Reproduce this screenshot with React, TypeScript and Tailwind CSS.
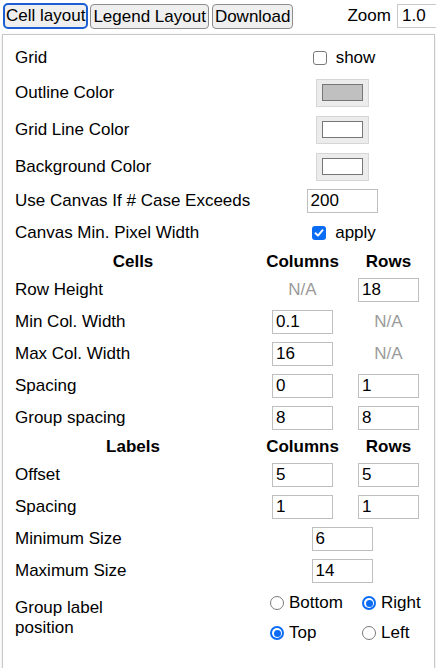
import React from 'react';

type RowProps = { h: string; children: React.ReactNode };

const Row: React.FC<RowProps> = ({ h, children }) => (
  <div className={`grid grid-cols-[246px_93px_79px] items-center ${h}`}>{children}</div>
);

const Label: React.FC<{ children: React.ReactNode }> = ({ children }) => (
  <div className="pl-[5px] leading-[20px]">{children}</div>
);

const TextBox: React.FC<{ value: string; w?: string }> = ({ value, w = 'w-[61px]' }) => (
  <input
    defaultValue={value}
    className={`${w} h-[24px] border border-[#bfbfbf] bg-white px-[3px] text-[17px] text-black outline-none`}
  />
);

const NA = () => <span className="text-[#9b9b9b]">N/A</span>;

const Check: React.FC<{ checked?: boolean }> = ({ checked }) =>
  checked ? (
    <span className="flex h-[14px] w-[14px] items-center justify-center rounded-[3px] bg-[#0a6cf5]">
      <svg width="10" height="10" viewBox="0 0 10 10">
        <path d="M1.5 5.2 L4 7.6 L8.6 2.2" fill="none" stroke="white" strokeWidth="1.9" strokeLinecap="round" strokeLinejoin="round" />
      </svg>
    </span>
  ) : (
    <span className="block h-[14px] w-[14px] rounded-[3px] border border-[#7a7a7a] bg-white"></span>
  );

const Radio: React.FC<{ checked?: boolean; label: string }> = ({ checked, label }) => (
  <div className="flex h-[30px] items-center gap-[5px]">
    {checked ? (
      <span className="flex h-[14px] w-[14px] items-center justify-center rounded-full bg-[#0a6cf5]">
        <span className="flex h-[10px] w-[10px] items-center justify-center rounded-full bg-white">
          <span className="block h-[7px] w-[7px] rounded-full bg-[#0a6cf5]"></span>
        </span>
      </span>
    ) : (
      <span className="block h-[14px] w-[14px] rounded-full border border-[#7a7a7a] bg-white"></span>
    )}
    <span>{label}</span>
  </div>
);

const Swatch: React.FC<{ fill: string }> = ({ fill }) => (
  <div className="flex h-[28px] w-[53px] items-center justify-center border border-[#d6d6d6] bg-[#ececec]">
    <div className={`h-[17px] w-[41px] border border-[#767676] ${fill}`}></div>
  </div>
);

const Span2: React.FC<{ children: React.ReactNode; className?: string }> = ({ children, className = '' }) => (
  <div className={`col-span-2 flex items-center justify-center ${className}`}>{children}</div>
);

const Center: React.FC<{ children: React.ReactNode }> = ({ children }) => (
  <div className="flex items-center justify-center">{children}</div>
);

export default function App() {
  return (
    <div className="relative h-[668px] w-[436px] overflow-hidden bg-white font-['Liberation_Sans',Arial,sans-serif] text-[17px] text-black">
      {/* toolbar */}
      <div className="flex h-[34px] items-start whitespace-nowrap pl-[3px] pt-[3px]">
        <button className="h-[26px] shrink-0 rounded-[5px] border-2 border-[#1c5fd2] bg-[#efefef] px-[1px] leading-[20px]">
          Cell layout
        </button>
        <button className="ml-[2px] mt-[1px] h-[25px] shrink-0 rounded-[4px] border border-[#8d8d8d] bg-[#efefef] px-[2px] leading-[20px]">
          Legend Layout
        </button>
        <button className="ml-[3px] mt-[1px] h-[25px] shrink-0 rounded-[4px] border border-[#8d8d8d] bg-[#efefef] px-[2px] leading-[20px]">
          Download
        </button>
        <span className="ml-[54px] mt-[3px] shrink-0 leading-[20px]">Zoom</span>
        <input
          defaultValue="1.0"
          className="ml-[6px] mt-[1px] h-[24px] w-[60px] shrink-0 border border-[#c8c8c8] px-[4px] text-[17px] outline-none"
        />
      </div>

      {/* settings panel */}
      <div className="ml-[2px] h-[700px] w-[433px] border border-[#c8c8c8] bg-white pl-[7px] pt-[6px] shadow-[0_1px_3px_rgba(0,0,0,0.12)]">
        <Row h="h-[33px]">
          <Label>Grid</Label>
          <Span2 className="gap-[9px] pl-[4px]">
            <Check />
            <span>show</span>
          </Span2>
        </Row>
        <Row h="h-[37px]">
          <Label>Outline Color</Label>
          <Span2>
            <Swatch fill="bg-[#c0c0c0]" />
          </Span2>
        </Row>
        <Row h="h-[37px]">
          <Label>Grid Line Color</Label>
          <Span2>
            <Swatch fill="bg-white" />
          </Span2>
        </Row>
        <Row h="h-[37px]">
          <Label>Background Color</Label>
          <Span2>
            <Swatch fill="bg-white" />
          </Span2>
        </Row>
        <Row h="h-[32px]">
          <Label>Use Canvas If # Case Exceeds</Label>
          <Span2>
            <TextBox value="200" w="w-[71px]" />
          </Span2>
        </Row>
        <Row h="h-[32px]">
          <Label>Canvas Min. Pixel Width</Label>
          <Span2 className="gap-[9px] pl-[4px]">
            <Check checked />
            <span>apply</span>
          </Span2>
        </Row>

        <Row h="h-[25px]">
          <div className="text-center font-bold">Cells</div>
          <div className="text-center font-bold">Columns</div>
          <div className="text-center font-bold">Rows</div>
        </Row>
        <Row h="h-[32px]">
          <Label>Row Height</Label>
          <Center><NA /></Center>
          <Center><TextBox value="18" /></Center>
        </Row>
        <Row h="h-[32px]">
          <Label>Min Col. Width</Label>
          <Center><TextBox value="0.1" /></Center>
          <Center><NA /></Center>
        </Row>
        <Row h="h-[32px]">
          <Label>Max Col. Width</Label>
          <Center><TextBox value="16" /></Center>
          <Center><NA /></Center>
        </Row>
        <Row h="h-[32px]">
          <Label>Spacing</Label>
          <Center><TextBox value="0" /></Center>
          <Center><TextBox value="1" /></Center>
        </Row>
        <Row h="h-[32px]">
          <Label>Group spacing</Label>
          <Center><TextBox value="8" /></Center>
          <Center><TextBox value="8" /></Center>
        </Row>

        <Row h="h-[25px]">
          <div className="text-center font-bold">Labels</div>
          <div className="text-center font-bold">Columns</div>
          <div className="text-center font-bold">Rows</div>
        </Row>
        <Row h="h-[32px]">
          <Label>Offset</Label>
          <Center><TextBox value="5" /></Center>
          <Center><TextBox value="5" /></Center>
        </Row>
        <Row h="h-[32px]">
          <Label>Spacing</Label>
          <Center><TextBox value="1" /></Center>
          <Center><TextBox value="1" /></Center>
        </Row>
        <Row h="h-[32px]">
          <Label>Minimum Size</Label>
          <Span2>
            <TextBox value="6" />
          </Span2>
        </Row>
        <Row h="h-[32px]">
          <Label>Maximum Size</Label>
          <Span2>
            <TextBox value="14" />
          </Span2>
        </Row>
        <Row h="h-[62px]">
          <Label>
            Group label
            <br />
            position
          </Label>
          <div className="pl-[14px]">
            <Radio label="Bottom" />
            <Radio label="Top" checked />
          </div>
          <div className="pl-[13px]">
            <Radio label="Right" checked />
            <Radio label="Left" />
          </div>
        </Row>
      </div>
    </div>
  );
}
